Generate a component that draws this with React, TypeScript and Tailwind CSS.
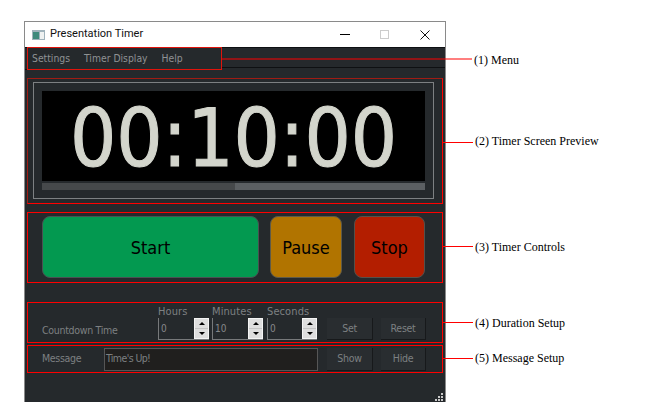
import React from 'react';

const uiFont = "font-['DejaVu_Sans_Condensed','DejaVu_Sans',sans-serif]";

const Callout: React.FC<{ label: string; width: number; className?: string; labelClass?: string }> = ({
  label,
  width,
  className = '',
  labelClass = '',
}) => (
  <div className={`absolute left-full top-1/2 flex -translate-y-1/2 items-center ${className}`}>
    <div className="h-px bg-[#ff0000]" style={{ width }} />
    <span className={`ml-[2px] whitespace-nowrap font-['Liberation_Serif',serif] text-[12px] leading-none text-black ${labelClass}`}>
      {label}
    </span>
  </div>
);

const Spin: React.FC<{ label: string; value: string; className: string }> = ({ label, value, className }) => (
  <div className={`flex flex-col ${className}`}>
    <span className="h-[12px] text-[11px] leading-[12px] tracking-[0.1px] text-[#7d8082]">{label}</span>
    <div className="flex h-[22px] border-b border-l border-[#77797b]">
      <span className="flex-1 pl-[2px] text-[10px] leading-[22px] text-[#85888a]">{value}</span>
      <div className="flex w-[15px] flex-col border border-[#f4f4f4] bg-[#dedede]">
        <div className="flex flex-1 items-center justify-center border-b border-[#c4c4c4]">
          <div className="h-0 w-0 border-x-[3.5px] border-b-[3px] border-x-transparent border-b-black" />
        </div>
        <div className="flex flex-1 items-center justify-center">
          <div className="h-0 w-0 border-x-[3.5px] border-t-[3px] border-x-transparent border-t-black" />
        </div>
      </div>
    </div>
  </div>
);

const FlatButton: React.FC<{ label: string; className: string }> = ({ label, className }) => (
  <button className={`flex items-center justify-center border-r border-b border-[#17191b] bg-[#292d30] text-[10.5px] tracking-[-0.3px] text-[#7d8082] ${className}`}>
    {label}
  </button>
);

export default function App() {
  return (
    <div className={`h-[420px] w-[650px] overflow-hidden bg-white pl-[24px] pt-[21px] ${uiFont}`}>
      <div className="flex h-[381px] w-[422px] flex-col border-t border-l border-r border-[#8a8a8a] bg-[#25292c]">
        {/* title bar */}
        <div className="flex h-[25px] items-center bg-white">
          <svg width="13" height="10" viewBox="0 0 13 10" className="ml-[7px]">
            <rect width="13" height="10" fill="#9fb2bb" />
            <rect x="1" y="2" width="6" height="7" fill="#3f8a7c" />
            <rect x="8" y="2" width="4" height="7" fill="#eef1f1" />
          </svg>
          <span className="ml-[5px] font-['Roboto',sans-serif] text-[11px] text-[#111]">Presentation Timer</span>
          <div className="ml-auto mr-[15px] flex items-center">
            <div className="h-px w-[10px] bg-black" />
            <div className="ml-[30px] h-[9px] w-[9px] border border-[#cccccc]" />
            <svg width="10" height="10" viewBox="0 0 10 10" className="ml-[31px]">
              <path d="M0.5 0.5 9.5 9.5M9.5 0.5 0.5 9.5" stroke="#111" strokeWidth="1" />
            </svg>
          </div>
        </div>

        {/* menu */}
        <div className="flex h-[23px]">
          <div className="w-[2px] border-y border-[#0e1012]" />
          <div className="relative flex w-[195px] items-center gap-[14px] pl-[5px] text-[10.3px] text-[#8f9294]">
            <span>Settings</span>
            <span>Timer Display</span>
            <span>Help</span>
            <div className="pointer-events-none absolute inset-0 z-10 outline outline-1 -outline-offset-1 outline-[#e0140c]" />
            <Callout label="(1) Menu" width={250} labelClass="mt-[1px]" />
          </div>
          <div className="mb-[2px] flex-1 border-y border-[#0e1012]" />
        </div>

        {/* preview */}
        <div className="relative mx-[2px] mt-[8px] h-[126px] border border-[#ff0000] border-l-[#a01c14] border-t-[#a01c14] p-[3px] pl-[5px]">
          <div className="h-[117px] w-[401px] border border-[#7d8082] p-[8px] pb-[7px]">
            <div className="flex h-[90px] items-center justify-center bg-black pt-[4px] text-[81px] leading-none text-[#d3d5cc] [-webkit-text-stroke:1px_#d3d5cc]">
              00:10:00
            </div>
            <div className="mt-[2px] flex h-[7px] bg-[#5b5f62]">
              <div className="w-[193px] bg-[#46494b]" />
            </div>
          </div>
          <Callout label="(2) Timer Screen Preview" width={31} className="mt-[1px]" labelClass="-mt-[2px]" />
        </div>

        {/* controls */}
        <div className="relative mx-[2px] mt-[8px] flex h-[71px] border border-[#ff0000] pb-[4px] pl-[14px] pt-[3px] text-[18px] text-black">
          <button className="w-[217px] rounded-[8px] border border-[#4a5052] bg-[#039950]">Start</button>
          <button className="ml-[11px] w-[72px] rounded-[8px] border border-[#5e5a48] bg-[#b17400]">Pause</button>
          <button className="ml-[12px] w-[71px] rounded-[8px] border border-[#55504a] bg-[#b31e00]">Stop</button>
          <Callout label="(3) Timer Controls" width={31} className="-mt-[1px]" />
        </div>

        {/* duration */}
        <div className="relative mx-[2px] mt-[19px] flex h-[41px] items-end border border-[#ff0000] pb-[2px] pl-[14px]">
          <span className="mb-[2px] w-[116px] text-[10.5px] leading-[16px] tracking-[-0.3px] text-[#7d8082]">Countdown Time</span>
          <Spin label="Hours" value="0" className="w-[51px]" />
          <Spin label="Minutes" value="10" className="ml-[3px] w-[51px]" />
          <Spin label="Seconds" value="0" className="ml-[4px] w-[50px]" />
          <FlatButton label="Set" className="ml-[10px] h-[22px] w-[46px]" />
          <FlatButton label="Reset" className="ml-[8px] h-[22px] w-[45px]" />
          <Callout label="(4) Duration Setup" width={31} />
        </div>

        {/* message */}
        <div className="relative mx-[2px] mt-[2px] flex h-[28px] items-center border border-[#ff0000] pl-[14px]">
          <span className="w-[62px] text-[10.5px] tracking-[-0.3px] text-[#7d8082]">Message</span>
          <div className="flex h-[23px] w-[214px] items-center border border-[#565656] bg-[#201f1e] pl-[1px] text-[10.5px] tracking-[-0.6px] text-[#7d8082]">
            Time's Up!
          </div>
          <FlatButton label="Show" className="ml-[9px] h-[23px] w-[46px]" />
          <FlatButton label="Hide" className="ml-[8px] h-[23px] w-[45px]" />
          <Callout label="(5) Message Setup" width={31} className="-mt-[1px]" />
        </div>

        {/* size grip */}
        <div className="mt-auto flex justify-end pb-[1px] pr-[2px]">
          <svg width="8" height="8" viewBox="0 0 8 8">
            <path d="M6 0h2v2H6zM3 3h2v2H3zM6 3h2v2H6zM0 6h2v2H0zM3 6h2v2H3zM6 6h2v2H6z" fill="#c8c8c8" />
          </svg>
        </div>
      </div>
    </div>
  );
}
